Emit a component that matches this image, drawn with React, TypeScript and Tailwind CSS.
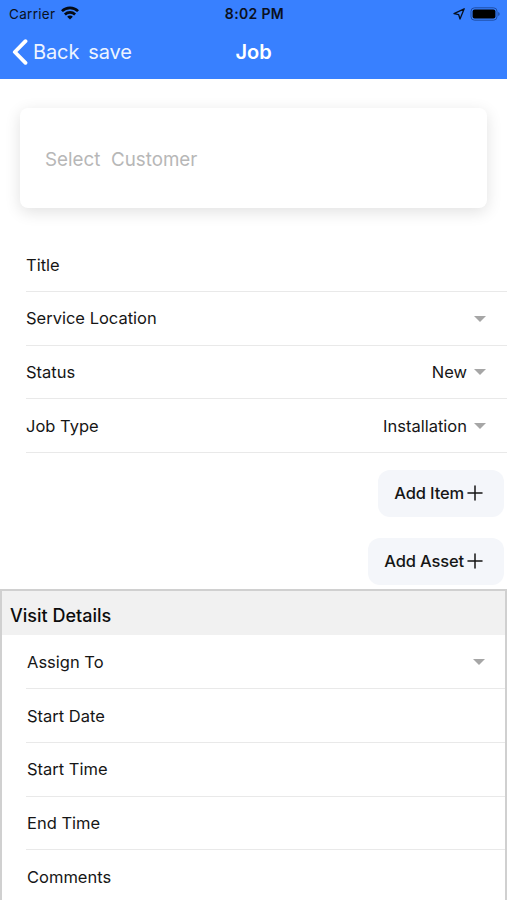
import React from "react";

function Caret() {
  return (
    <svg className="h-[6px] w-[12px] shrink-0" viewBox="0 0 12 6">
      <path d="M0 0h12L6 6z" fill="#a6a6a6" />
    </svg>
  );
}

type RowProps = { label: string; value?: string; caret?: boolean; last?: boolean; inset?: boolean };

function Row({ label, value, caret, last, inset }: RowProps) {
  return (
    <div
      className={`flex h-[53.8px] items-center justify-between border-b pt-[1px] ${
        inset ? "pr-[20px] pl-[1px] text-[16.5px]" : "pr-[21px] text-[16.5px]"
      } ${last ? "border-transparent" : "border-[#e9e9e9]"}`}
    >
      <span>{label}</span>
      <span className="flex items-center gap-[7px]">
        {value && <span>{value}</span>}
        {caret && <Caret />}
      </span>
    </div>
  );
}

function AddButton({ label, width }: { label: string; width: string }) {
  return (
    <button
      className={`flex h-[47px] items-center justify-end gap-[3px] rounded-[12px] bg-[#f4f6fa] pr-[21px] text-[16.5px] font-medium tracking-[-0.15px] whitespace-nowrap ${width}`}
    >
      <span>{label}</span>
      <svg className="-mt-[1px] h-[16px] w-[16px] shrink-0" viewBox="0 0 16 16" fill="none" stroke="#151515" strokeWidth="1.5" strokeLinecap="round">
        <path d="M8 1v14M1 8h14" />
      </svg>
    </button>
  );
}

export default function App() {
  return (
    <div className="flex h-[900px] w-[507px] flex-col overflow-hidden bg-white font-['Inter',sans-serif] text-[#161616]">
      <header className="h-[79px] shrink-0 bg-[#3880ff]">
        <div className="grid h-[27px] grid-cols-3 items-center pr-[7px] pl-[9px] text-[13px] text-[#0a1020]">
          <div className="flex items-center gap-[6px] pt-[1px]">
            <span className="text-[13.5px] tracking-[0.3px]">Carrier</span>
            <svg className="-mt-[2px] h-[14px] w-[18px]" viewBox="0 0 19 14" fill="none" stroke="#050a14" strokeWidth="2.8">
              <path d="M1 5a12.2 12.2 0 0 1 17 0" />
              <path d="M4.1 8.5a7.8 7.8 0 0 1 10.8 0" />
              <path d="M9.5 13.8 6.5 11a4 4 0 0 1 6 0z" fill="#050a14" stroke="none" />
            </svg>
          </div>
          <div className="pb-[1px] text-center text-[14px] font-semibold tracking-[0.35px] whitespace-nowrap">8:02 PM</div>
          <div className="flex items-center justify-end gap-[5px]">
            <svg className="h-[12px] w-[12px]" viewBox="0 0 12 12" fill="none" stroke="#07101f" strokeWidth="1.3" strokeLinejoin="round">
              <path d="M11.2 .8 7 11 5.7 6.7 1 5.7z" />
            </svg>
            <svg className="h-[14px] w-[30px]" viewBox="0 0 30 14">
              <rect x="1" y="0.8" width="26" height="12.4" rx="3.5" fill="none" stroke="#1f4da5" strokeWidth="1" />
              <rect x="2.6" y="2.5" width="22.8" height="9" rx="2" fill="#000" />
              <path d="M28.2 5v4q1.5-.6 1.5-2t-1.5-2z" fill="#1f4da5" />
            </svg>
          </div>
        </div>
        <div className="grid h-[50px] grid-cols-3 items-center pr-[12px] pl-[12px] text-[20px] text-[#edf4ff]">
          <div className="flex items-center whitespace-nowrap">
            <svg className="mr-[5px] h-[26px] w-[16px]" viewBox="0 0 16 26" fill="none" stroke="#fff" strokeWidth="3.8" strokeLinecap="round" strokeLinejoin="round">
              <path d="M13.5 2.2 2.8 13l10.7 10.8" />
            </svg>
            <span className="tracking-[-0.1px]">Back</span>
            <span className="ml-[9px] tracking-[-0.1px]">save</span>
          </div>
          <h1 className="text-center font-semibold text-white">Job</h1>
        </div>
      </header>

      <section className="mx-[20px] mt-[29px] flex h-[100px] shrink-0 items-center rounded-[8px] bg-white px-[25px] pt-[5px] text-[18.8px] text-[#b7b7b7] shadow-[0_4px_16px_rgba(0,0,0,0.12)]">
        <span className="whitespace-pre">Select  Customer</span>
      </section>

      <section className="mt-[30px] ml-[26px] shrink-0">
        <Row label="Title" />
        <Row label="Service Location" caret />
        <Row label="Status" value="New" caret />
        <Row label="Job Type" value="Installation" caret />
      </section>

      <div className="mt-[17px] flex shrink-0 flex-col items-end gap-[21px] pr-[3px]">
        <AddButton label="Add Item" width="w-[126px]" />
        <AddButton label="Add Asset" width="w-[136px]" />
      </div>

      <section className="mt-[4px] h-[400px] shrink-0 border-2 border-[#d0d0d0]">
        <h2 className="flex h-[44px] items-center bg-[#f1f1f1] pt-[5px] pl-[8px] text-[18px] font-medium text-[#0c0c0c]">
          Visit Details
        </h2>
        <div className="ml-[24px]">
          <Row label="Assign To" caret inset />
          <Row label="Start Date" inset />
          <Row label="Start Time" inset />
          <Row label="End Time" inset />
          <Row label="Comments" last inset />
        </div>
      </section>
    </div>
  );
}
